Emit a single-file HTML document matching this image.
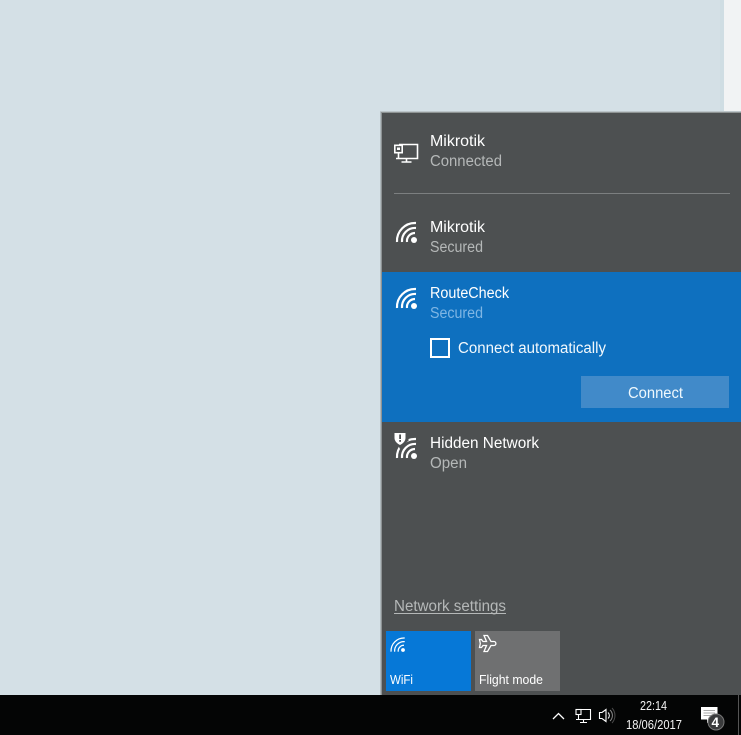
<!DOCTYPE html>
<html><head><meta charset="utf-8">
<style>
html,body{margin:0;padding:0;width:741px;height:735px;overflow:hidden;background:#d4e0e6}
svg{display:block;position:absolute;left:0;top:0}
text{font-family:"Liberation Sans",sans-serif}
</style></head>
<body>
<svg width="741" height="735" viewBox="0 0 741 735" xmlns="http://www.w3.org/2000/svg">
<defs>
<g id="wifi" fill="none">
  <path d="M-18 1A18 18 0 0 1 1 -18"/>
  <path d="M-13 1A13 13 0 0 1 1 -13"/>
  <path d="M-8 1A8 8 0 0 1 0 -8"/>
</g>
</defs>
<rect width="741" height="735" fill="#d4e0e6"/>
<rect x="724" y="0" width="17" height="111" fill="#f1f3f4"/>
<rect x="720" y="0" width="4" height="111" fill="#cfdde3"/>
<rect x="380" y="111" width="361" height="1" fill="#bcc5c9"/>
<rect x="380" y="112" width="1" height="583" fill="#b0babe"/>
<rect x="381" y="112" width="360" height="1" fill="#8f9494"/>
<rect x="381" y="112" width="1" height="583" fill="#8d9294"/>
<rect x="382" y="113" width="359" height="582" fill="#4d5051"/>
<!-- Wired icon -->
<g fill="none" stroke="#fff" stroke-width="1.600">
  <path d="M399 144.500H417.500V158.500H396"/>
  <path d="M406.500 158.500V162M401.500 162H411.500"/>
  <rect x="394.800" y="145.300" width="7.400" height="7.400" fill="#4d5051"/>
  <path d="M398.500 152.700V158.500"/>
  <rect x="397" y="147.500" width="3" height="2.500" fill="#fff" stroke="none"/>
</g>
<text x="430" y="146" font-size="16" fill="#fff" textLength="55" lengthAdjust="spacingAndGlyphs">Mikrotik</text>
<text x="430" y="166" font-size="15.500" fill="#b5b8b8" textLength="72" lengthAdjust="spacingAndGlyphs">Connected</text>
<rect x="394" y="193" width="336" height="1" fill="#7c7f80"/>
<!-- Mikrotik wifi -->
<g transform="translate(415 241)" stroke="#fff" stroke-width="2.200"><use href="#wifi"/></g>
<circle cx="414" cy="240" r="3" fill="#fff"/>
<text x="430" y="232" font-size="16" fill="#fff" textLength="55" lengthAdjust="spacingAndGlyphs">Mikrotik</text>
<text x="430" y="252" font-size="15.500" fill="#b5b8b8" textLength="53" lengthAdjust="spacingAndGlyphs">Secured</text>
<!-- Selected -->
<rect x="382" y="272" width="359" height="150" fill="#0e70bf"/>
<g transform="translate(415 307)" stroke="#fff" stroke-width="2.200"><use href="#wifi"/></g>
<circle cx="414" cy="306" r="3" fill="#fff"/>
<text x="430" y="298" font-size="15.500" fill="#fff" textLength="79" lengthAdjust="spacingAndGlyphs">RouteCheck</text>
<text x="430" y="318" font-size="15.500" fill="#7fb6e4" textLength="53" lengthAdjust="spacingAndGlyphs">Secured</text>
<rect x="431" y="339" width="18" height="18" fill="none" stroke="#fff" stroke-width="2"/>
<text x="458" y="353" font-size="15.500" fill="#f2f8fc" textLength="148" lengthAdjust="spacingAndGlyphs">Connect automatically</text>
<rect x="581" y="376" width="148" height="32" fill="#418ac9"/>
<text x="628" y="398" font-size="15.500" fill="#eef8fd" textLength="55" lengthAdjust="spacingAndGlyphs">Connect</text>
<!-- Hidden -->
<g transform="translate(415 457)" stroke="#fff" stroke-width="2.200"><use href="#wifi"/></g>
<circle cx="414" cy="456" r="3" fill="#fff"/>
<path d="M392 433L402 433L409 440L400 449Z" fill="#4d5051"/>
<path d="M394.500 433H405.500V438C405.500 441 403 443.500 400 445C397 443.500 394.500 441 394.500 438Z" fill="#fff"/>
<rect x="399.200" y="434.500" width="1.800" height="4.500" fill="#4d5051"/>
<rect x="399.200" y="440" width="1.800" height="1.800" fill="#4d5051"/>
<text x="430" y="448" font-size="15.500" fill="#fff" textLength="109" lengthAdjust="spacingAndGlyphs">Hidden Network</text>
<text x="430" y="468" font-size="15.500" fill="#b5b8b8" textLength="37" lengthAdjust="spacingAndGlyphs">Open</text>
<!-- Settings -->
<text x="394" y="611" font-size="15.500" fill="#b5b8b8" textLength="112" lengthAdjust="spacingAndGlyphs">Network settings</text>
<rect x="394" y="613" width="112" height="1" fill="#b5b8b8"/>
<!-- Tiles -->
<rect x="386" y="631" width="85" height="60" fill="#0678d7"/>
<g transform="translate(404 651) scale(.72)" stroke="#fff" stroke-width="1.700"><use href="#wifi"/></g>
<circle cx="403" cy="650" r="1.900" fill="#fff"/>
<text x="390" y="684" font-size="12.500" fill="#fff" textLength="23" lengthAdjust="spacingAndGlyphs">WiFi</text>
<rect x="475" y="631" width="85" height="60" fill="#6f7071"/>
<path d="M484 635.500H487.500L491 641.500H494C496.500 641.500 496.500 645.500 494 645.500H491L487.500 651.500H484L486.500 645.500H483L481.500 647.500H479.500L480.300 643.500L479.500 639.500H481.500L483 641.500H486.500Z" fill="none" stroke="#fff" stroke-width="1.300"/>
<text x="479" y="684" font-size="12.500" fill="#fff" textLength="64" lengthAdjust="spacingAndGlyphs">Flight mode</text>
<!-- Taskbar -->
<rect x="0" y="695" width="741" height="40" fill="#040505"/>
<path d="M553 719L558.500 713.500L564 719" fill="none" stroke="#fff" stroke-width="1.300"/>
<g fill="none" stroke="#fff" stroke-width="1.100">
  <path d="M578 709.500H590.500V719.500H576"/>
  <rect x="576" y="709.500" width="5" height="5" fill="#040505"/>
  <path d="M578.500 714.500V719.500M583.500 719.500V722.500M580 722.500H587"/>
</g>
<g fill="none" stroke="#fff">
  <path d="M599.500 712.500H602L606 709.500V721.500L602 718.500H599.500Z" stroke-width="1.100"/>
  <path d="M608 712.500A4 4 0 0 1 608 718.500" stroke-width="1"/>
  <path d="M610 710A7.500 7.500 0 0 1 610 721" stroke="#8b8b8b" stroke-width="1"/>
  <path d="M612 708A11 11 0 0 1 612 723" stroke="#4a4a4a" stroke-width="1"/>
</g>
<text x="640" y="710" font-size="12.500" fill="#f2f2f2" textLength="27" lengthAdjust="spacingAndGlyphs">22:14</text>
<text x="626" y="729" font-size="12.500" fill="#f2f2f2" textLength="56" lengthAdjust="spacingAndGlyphs">18/06/2017</text>
<path d="M701 707H717.500V719.500H711L707 723V719.500H701Z" fill="#fff"/>
<path d="M703.500 710.500H715M703.500 713H715M703.500 715.500H711" stroke="#aaa" stroke-width="1"/>
<circle cx="716" cy="722" r="8" fill="#3a3b3c" stroke="#777" stroke-width="1"/>
<text x="711.500" y="727" font-size="13.500" font-weight="bold" fill="#fff">4</text>
<rect x="738" y="695" width="1" height="40" fill="#555"/>
</svg>
</body></html>
